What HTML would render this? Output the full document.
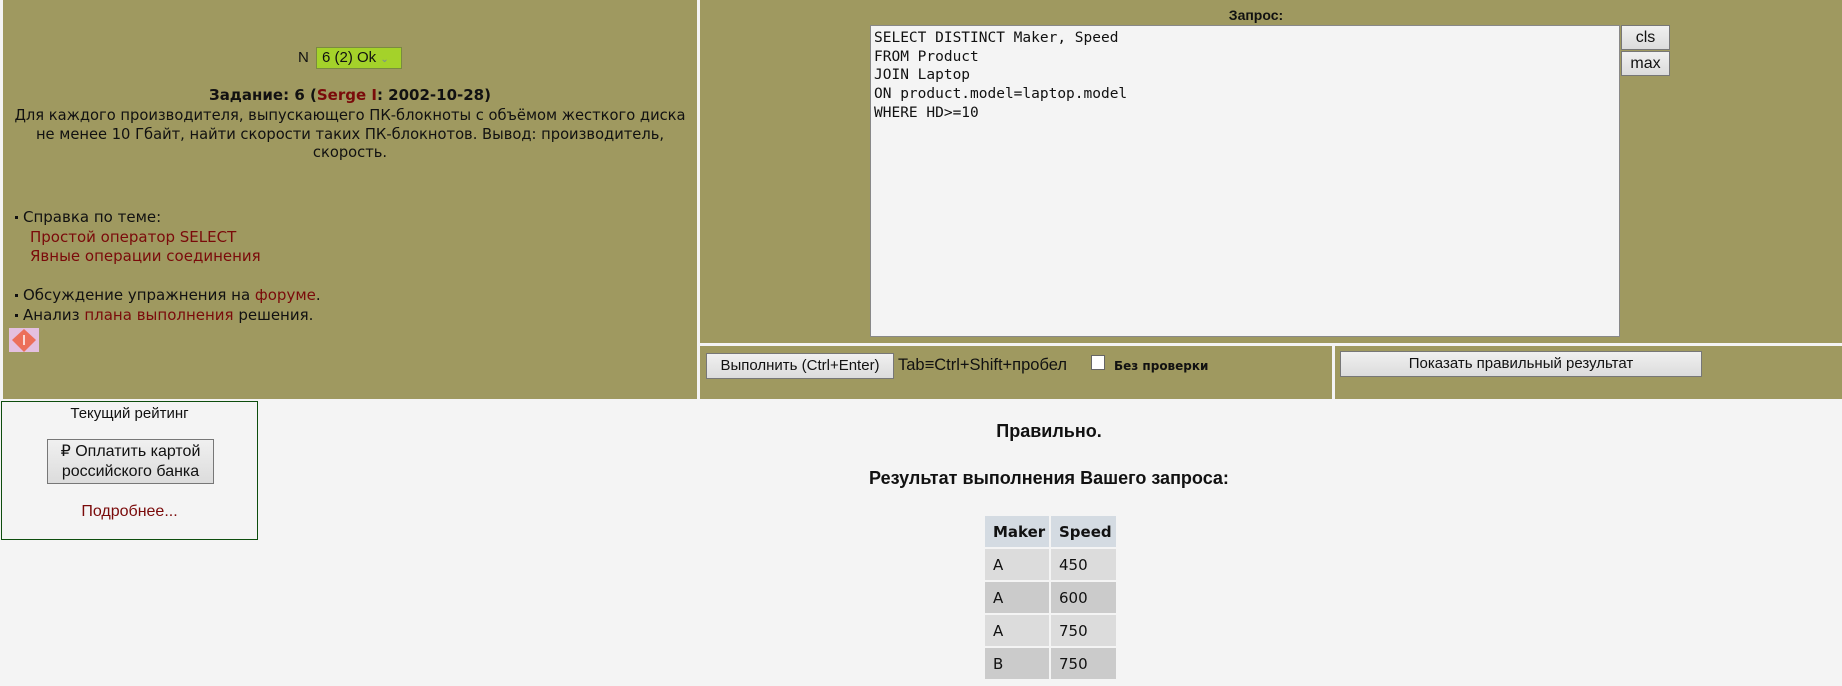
<!DOCTYPE html>
<html><head><meta charset="utf-8"><style>
body{margin:0;width:1842px;height:686px;background:#f4f4f4;font-family:"Liberation Sans","DejaVu Sans",sans-serif;position:relative;overflow:hidden;color:#111}
.a{position:absolute}
.ol{background:#9f9960}
a{color:#7a0a0a;text-decoration:none}
.btn{position:absolute;background:linear-gradient(#f0f0f0,#dcdcdc);border:1px solid #777;box-sizing:border-box;font-size:15px;text-align:center;color:#111}
.dv{font-family:"DejaVu Sans",sans-serif}
td{padding:0 0 0 8px;font-family:"DejaVu Sans",sans-serif;font-size:15px;height:31px}
.b{display:inline-block;width:3px;height:3px;background:#111;vertical-align:middle;margin:0 5px 0 1px}
</style></head><body>
<div class="a ol" style="left:3px;top:0;width:694px;height:399px"></div>
<div class="a ol" style="left:700px;top:0;width:1142px;height:343px"></div>
<div class="a ol" style="left:700px;top:346px;width:632px;height:53px"></div>
<div class="a ol" style="left:1335px;top:346px;width:507px;height:53px"></div>

<div class="a" style="left:298px;top:49px;font-size:15px">N</div>
<div class="a" style="left:316px;top:47px;width:86px;height:22px;background:#a4d22a;border:1px solid #7a8a40;box-sizing:border-box;font-size:15px;padding-left:5px;line-height:20px">6 (2) Ok <span style="color:#789;font-size:10px">&#8964;</span></div>
<div class="a dv" style="left:3px;width:694px;top:86px;text-align:center;font-size:15px;font-weight:bold">Задание: 6 (<a>Serge I</a>: 2002-10-28)</div>
<div class="a dv" style="left:3px;width:694px;top:107px;text-align:center;font-size:14.7px;line-height:18.5px;white-space:nowrap">Для каждого производителя, выпускающего ПК-блокноты с объёмом жесткого диска<br>не менее 10 Гбайт, найти скорости таких ПК-блокнотов. Вывод: производитель,<br>скорость.</div>
<div class="a dv" style="left:14px;top:208px;font-size:15px;line-height:19.5px"><span class="b"></span>Справка по теме:<br><span style="padding-left:16px"><a>Простой оператор SELECT</a></span><br><span style="padding-left:16px"><a>Явные операции соединения</a></span></div>
<div class="a dv" style="left:14px;top:286px;font-size:15px;line-height:19.5px"><span class="b"></span>Обсуждение упражнения на <a>форуме</a>.<br><span class="b"></span>Анализ <a>плана выполнения</a> решения.</div>
<div class="a" style="left:9px;top:328px;width:30px;height:24px;background:#e4c0e0"><svg width="30" height="24"><path d="M15 1 L27 12 L15 24 L3 12Z" fill="#ec6f5a"/><path d="M15 7V17" stroke="#fff" stroke-width="1.5"/></svg></div>

<div class="a" style="left:1px;top:401px;width:257px;height:139px;border:1px solid #0d4d0d;box-sizing:border-box"></div>
<div class="a" style="left:1px;width:257px;top:405px;text-align:center;font-size:15px">Текущий рейтинг</div>
<div class="btn" style="left:47px;top:439px;width:167px;height:45px;line-height:20px;padding-top:2px;font-size:16px">₽ Оплатить картой<br>российского банка</div>
<div class="a" style="left:1px;width:257px;top:503px;text-align:center;font-size:16px"><a>Подробнее...</a></div>

<div class="a" style="left:700px;width:1142px;top:7px;text-align:center;font-size:14px;font-weight:bold;text-indent:-30px">Запрос:</div>
<div class="a" style="left:870px;top:25px;width:750px;height:312px;background:#f4f4f4;border:1px solid #888;box-sizing:border-box;font-family:'DejaVu Sans Mono','Liberation Mono',monospace;font-size:14.5px;line-height:18.7px;padding:3px 3px;white-space:pre">SELECT DISTINCT Maker, Speed
FROM Product
JOIN Laptop
ON product.model=laptop.model
WHERE HD&gt;=10</div>
<div class="btn" style="left:1621px;top:25px;width:49px;height:25px;line-height:23px;font-size:16px">cls</div>
<div class="btn" style="left:1621px;top:51px;width:49px;height:25px;line-height:23px;font-size:16px">max</div>

<div class="btn" style="left:706px;top:353px;width:188px;height:26px;line-height:24px">Выполнить (Ctrl+Enter)</div>
<div class="a" style="left:898px;top:356px;font-size:16.5px">Tab≡Ctrl+Shift+пробел</div>
<div class="a" style="left:1091px;top:355px;width:12px;height:13px;background:#fff;border:1px solid #666"></div>
<div class="a dv" style="left:1114px;top:359px;font-size:12px;font-weight:bold">Без проверки</div>
<div class="btn" style="left:1340px;top:351px;width:362px;height:26px;line-height:24px">Показать правильный результат</div>

<div class="a" style="left:256px;width:1586px;top:421px;text-align:center;font-size:18px;font-weight:bold">Правильно.</div>
<div class="a" style="left:256px;width:1586px;top:468px;text-align:center;font-size:18px;font-weight:bold">Результат выполнения Вашего запроса:</div>
<table class="a" style="left:983px;top:514px;border-spacing:2px;border-collapse:separate">
<tr style="background:#d4dbe2"><td style="width:56px;font-weight:bold">Maker</td><td style="width:57px;font-weight:bold">Speed</td></tr>
<tr style="background:#dcdcdc"><td>A</td><td>450</td></tr>
<tr style="background:#cbcbcb"><td>A</td><td>600</td></tr>
<tr style="background:#dcdcdc"><td>A</td><td>750</td></tr>
<tr style="background:#cbcbcb"><td>B</td><td>750</td></tr>
</table>
</body></html>
